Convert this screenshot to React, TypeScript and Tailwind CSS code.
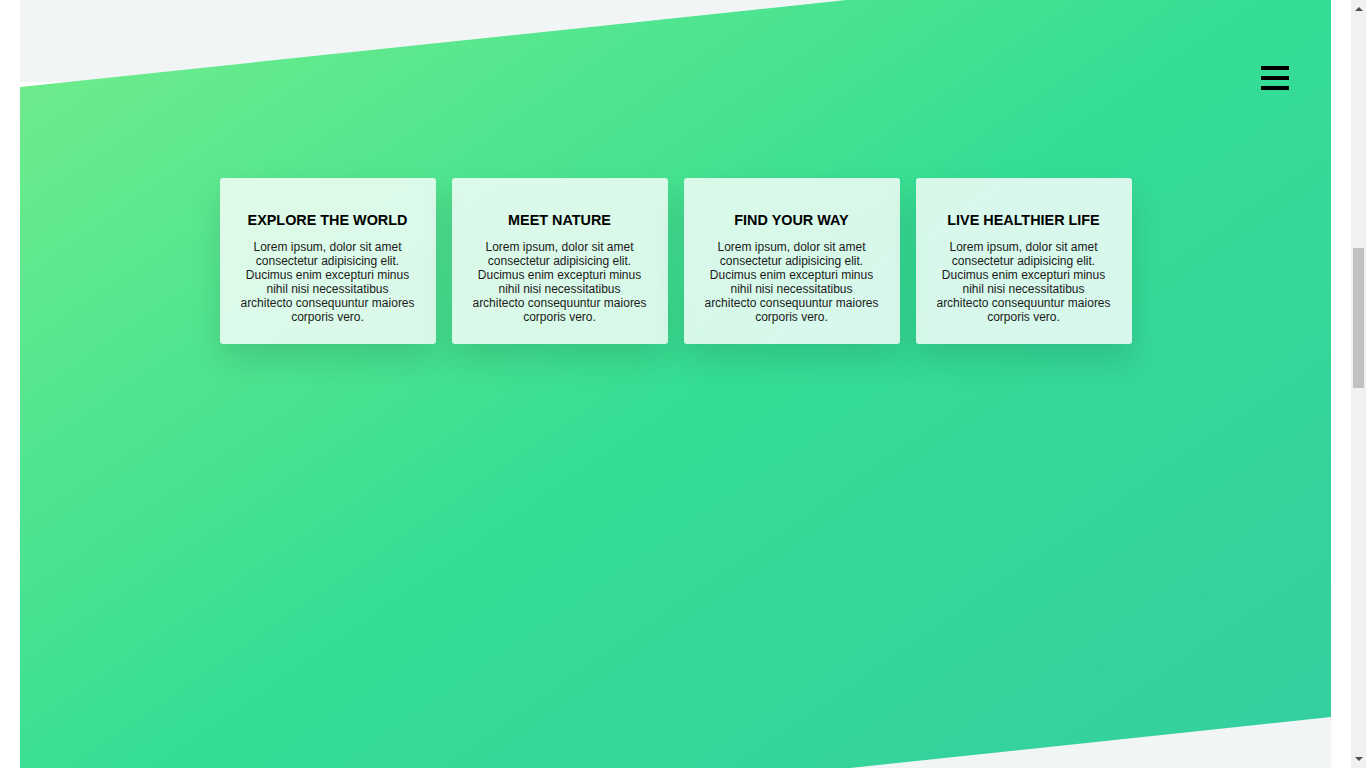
import React from "react";

const cards = [
  "EXPLORE THE WORLD",
  "MEET NATURE",
  "FIND YOUR WAY",
  "LIVE HEALTHIER LIFE",
];

const body =
  "Lorem ipsum, dolor sit amet consectetur adipisicing elit. Ducimus enim excepturi minus nihil nisi necessitatibus architecto consequuntur maiores corporis vero.";

export default function App() {
  return (
    <div className="flex w-[1366px] h-[768px] overflow-hidden bg-white font-['Liberation_Sans',Arial,sans-serif]">
      <div className="w-[20px] shrink-0" />
      <div className="w-[1311px] shrink-0 h-[768px] overflow-hidden flex flex-col">
        <div className="h-[82px] shrink-0 bg-[#f1f5f6]" />
        <section className="relative z-10 -mt-[133px] h-[907px] shrink-0 bg-[linear-gradient(to_bottom_right,#77ee8a_0%,#35de94_50%,#34cca1_100%)] [clip-path:polygon(0_15.215%,100%_0,100%_84.675%,0_100%)] flex flex-col pt-[117px]">
          <div className="flex justify-end pr-[42px]">
            <div className="flex flex-col gap-[6.5px] w-[28px]">
              <span className="block h-[3.5px] bg-black" />
              <span className="block h-[3.5px] bg-black" />
              <span className="block h-[3.5px] bg-black" />
            </div>
          </div>
          <div className="mt-[88.5px] flex justify-center gap-4">
            {cards.map((t) => (
              <div
                key={t}
                className="w-[216px] h-[166px] rounded-[3px] bg-white/80 shadow-[0_1rem_2rem_rgba(0,0,0,0.12)] px-5 pt-[34px] text-center"
              >
                <h3 className="text-[14.4px] font-bold text-black leading-[16.5px]">
                  {t}
                </h3>
                <p className="mt-[11px] text-[12px] leading-[14px] text-[#1a1a1a]">
                  {body}
                </p>
              </div>
            ))}
          </div>
        </section>
        <div className="h-[400px] -mt-[200px] shrink-0 bg-[#f1f5f6]" />
      </div>
      <div className="w-[20px] shrink-0" />
      <div className="w-[15px] shrink-0 bg-[#f1f1f1] flex flex-col items-center">
        <div className="h-[17px] w-full flex items-center justify-center">
          <svg width="8" height="5" viewBox="0 0 8 5">
            <path d="M0 5 L4 1 L8 5 Z" fill="#505050" />
          </svg>
        </div>
        <div className="mt-[231px] w-[11px] h-[140px] bg-[#c1c1c1]" />
        <div className="flex-1" />
        <div className="h-[17px] w-full flex items-center justify-center">
          <svg width="8" height="5" viewBox="0 0 8 5">
            <path d="M0 0 L4 4 L8 0 Z" fill="#505050" />
          </svg>
        </div>
      </div>
    </div>
  );
}
